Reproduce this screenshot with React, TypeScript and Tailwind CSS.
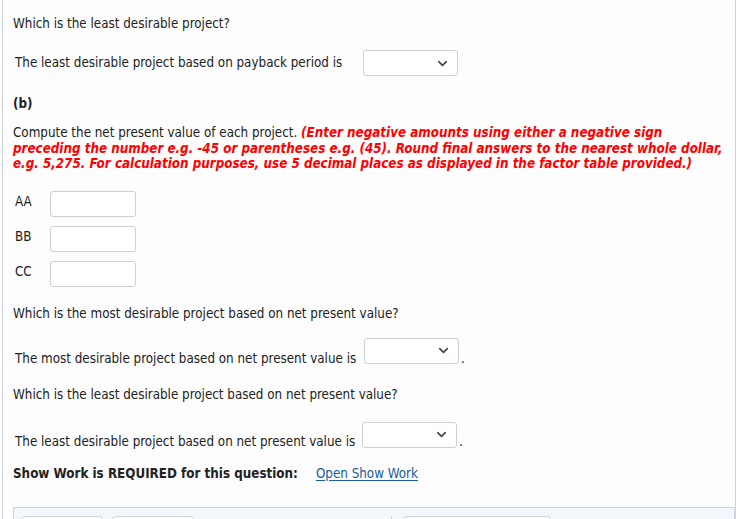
import { ChevronDown } from "lucide-react";

const font = "font-['DejaVu_Sans_Condensed','DejaVu_Sans',sans-serif]";

function Select({ className = "" }: { className?: string }) {
  return (
    <div
      className={`flex h-[26px] w-[95px] items-center justify-end rounded-[3px] border border-[#cfcfcf] bg-white pr-[7px] ${className}`}
    >
      <ChevronDown size={15} strokeWidth={2.6} className="text-[#444]" />
    </div>
  );
}

function AmountRow({ label }: { label: string }) {
  return (
    <div className="flex items-start">
      <span className="w-[37px] pl-[2px] pt-[2px] leading-[18px] text-[#222]">{label}</span>
      <div className="h-[26px] w-[86px] rounded-[3px] border border-[#cfcfcf] bg-white" />
    </div>
  );
}

export default function App() {
  return (
    <div className={`${font} h-[519px] w-[739px] overflow-hidden bg-white text-[13.3px] text-[#222]`}>
      <div className="ml-[2px] mr-[3px] flex h-full flex-col border-x border-[#cdd4de] bg-[#fdfdfd] pl-[10px]">
        <p className="mt-[15px] leading-[18px]">Which is the least desirable project?</p>

        <div className="mt-[17px] flex items-start pl-[2px]">
          <span className="w-[348px] pt-[4px] leading-[18px]">
            The least desirable project based on payback period is
          </span>
          <Select />
        </div>

        <p className="mt-[19px] font-bold leading-[18px]">(b)</p>

        <p className="mt-[12px] whitespace-nowrap leading-[15.5px]">
          Compute the net present value of each project.{" "}
          <span className="font-bold italic text-[#ff0000]">
            (Enter negative amounts using either a negative sign
            <br />
            preceding the number e.g. -45 or parentheses e.g. (45). Round final answers to the nearest whole dollar,
            <br />
            e.g. 5,275. For calculation purposes, use 5 decimal places as displayed in the factor table provided.)
          </span>
        </p>

        <div className="mt-[19px] flex flex-col gap-[9px]">
          <AmountRow label="AA" />
          <AmountRow label="BB" />
          <AmountRow label="CC" />
        </div>

        <p className="mt-[18px] leading-[18px]">Which is the most desirable project based on net present value?</p>

        <div className="mt-[15px] flex items-start pl-[2px]">
          <span className="w-[349px] pt-[12px] leading-[18px]">
            The most desirable project based on net present value is
          </span>
          <Select />
          <span className="ml-[2px] pt-[12px] leading-[18px]">.</span>
        </div>

        <p className="mt-[18px] leading-[18px]">Which is the least desirable project based on net present value?</p>

        <div className="mt-[18px] flex items-start pl-[2px]">
          <span className="w-[347px] pt-[11px] leading-[18px]">
            The least desirable project based on net present value is
          </span>
          <Select />
          <span className="ml-[2px] pt-[11px] leading-[18px]">.</span>
        </div>

        <div className="mt-[14px] flex items-center leading-[18px]">
          <span className="font-bold">Show Work is REQUIRED for this question:</span>
          <a className="ml-[18px] text-[#1b5c99] underline underline-offset-2" href="#">
            Open Show Work
          </a>
        </div>

        <div className="mt-[24px] flex h-[40px] border border-[#cdd4de] bg-[#f3f6fa] pt-[8px]">
          <div className="flex w-[378px] gap-[9px] border-r border-[#cdd4de] pl-[7px]">
            <div className="h-[30px] w-[82px] rounded-[4px] border border-[#cdd4de] bg-white" />
            <div className="h-[30px] w-[82px] rounded-[4px] border border-[#cdd4de] bg-white" />
          </div>
          <div className="pl-[11px]">
            <div className="h-[30px] w-[148px] rounded-[4px] border border-[#cdd4de] bg-white" />
          </div>
        </div>
      </div>
    </div>
  );
}
